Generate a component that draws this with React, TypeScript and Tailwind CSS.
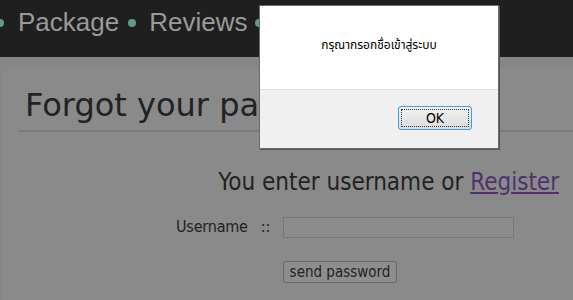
export default function App() {
  return (
    <div className="relative w-[573px] h-[300px] overflow-hidden bg-[#868686] font-['DejaVu_Sans',sans-serif]">
      {/* nav */}
      <nav className="h-[57px] bg-[#1f1f1f] flex items-start pt-[3px] font-['Liberation_Sans',Arial,sans-serif] text-[26px] text-[#9a9a9a]">
        <div className="flex items-center -ml-[4px]">
          <span className="w-[8px] h-[8px] rounded-full bg-[#5f9c86]" />
          <span className="ml-[14px]">Package</span>
          <span className="ml-[9px] w-[8px] h-[8px] rounded-full bg-[#5f9c86]" />
          <span className="ml-[13px]">Reviews</span>
          <span className="ml-[8px] w-[8px] h-[8px] rounded-full bg-[#5f9c86]" />
          <span className="ml-[14px]">Contact</span>
        </div>
      </nav>

      {/* page content */}
      <main className="mt-[11px] ml-[2px] bg-[#8a8a8a] rounded-tl-[10px] h-[240px]">
        <div className="ml-[16px] border-b-2 border-[#7b7b7b] pt-[18px] pb-[6px] pl-[7px]">
          <h1 className="text-[32px] leading-[38px] text-[#222] whitespace-nowrap">Forgot your password</h1>
        </div>
        <div className="flex flex-col items-end pr-[14px] pt-[36px]">
          <p className="text-[24px] leading-[29px] text-[#222] font-['DejaVu_Sans_Condensed','DejaVu_Sans',sans-serif] whitespace-nowrap">
            You enter username or <a className="underline text-[#4e3270]">Register</a>
          </p>
        </div>
        <div className="flex items-center pl-[174px] pt-[18px] text-[16px] text-[#222] font-['DejaVu_Sans_Condensed','DejaVu_Sans',sans-serif]">
          <span className="tracking-[-0.2px]">Username</span>
          <span className="ml-[13px]">::</span>
          <div className="ml-[13px] w-[231px] h-[21px] border border-[#777] bg-[#8c8c8c]" />
        </div>
        <div className="pl-[281px] pt-[21px]">
          <button className="w-[114px] h-[22px] border border-[#666] rounded-[2px] bg-[#8e8e8e] text-[15px] leading-[18px] text-[#222] font-['DejaVu_Sans_Condensed','DejaVu_Sans',sans-serif]">
            send password
          </button>
        </div>
      </main>

      {/* alert dialog */}
      <div className="absolute left-[259px] top-[5px] w-[240px] h-[144px] border border-[#6a6a6a] bg-[#f0f0f0] flex flex-col shadow-[1px_1px_0_#555]">
        <div className="h-[84px] bg-white border-b border-[#dfdfdf] flex items-center justify-center pb-[6px]">
          <span className="text-[12px] text-black font-['Tahoma','Noto_Sans_Thai','Noto_Sans',sans-serif]">กรุณากรอกชื่อเข้าสู่ระบบ</span>
        </div>
        <div className="flex justify-end pr-[26px] pt-[16px]">
          <button className="w-[74px] h-[24px] rounded-[3px] border border-[#3c9fe0] bg-gradient-to-b from-[#f2f2f2] to-[#dcdcdc] p-[2px]">
            <span className="block w-full h-full border border-dotted border-[#333] text-[14px] leading-[16px] text-black font-['Tahoma','DejaVu_Sans_Condensed',sans-serif]">OK</span>
          </button>
        </div>
      </div>
    </div>
  );
}
